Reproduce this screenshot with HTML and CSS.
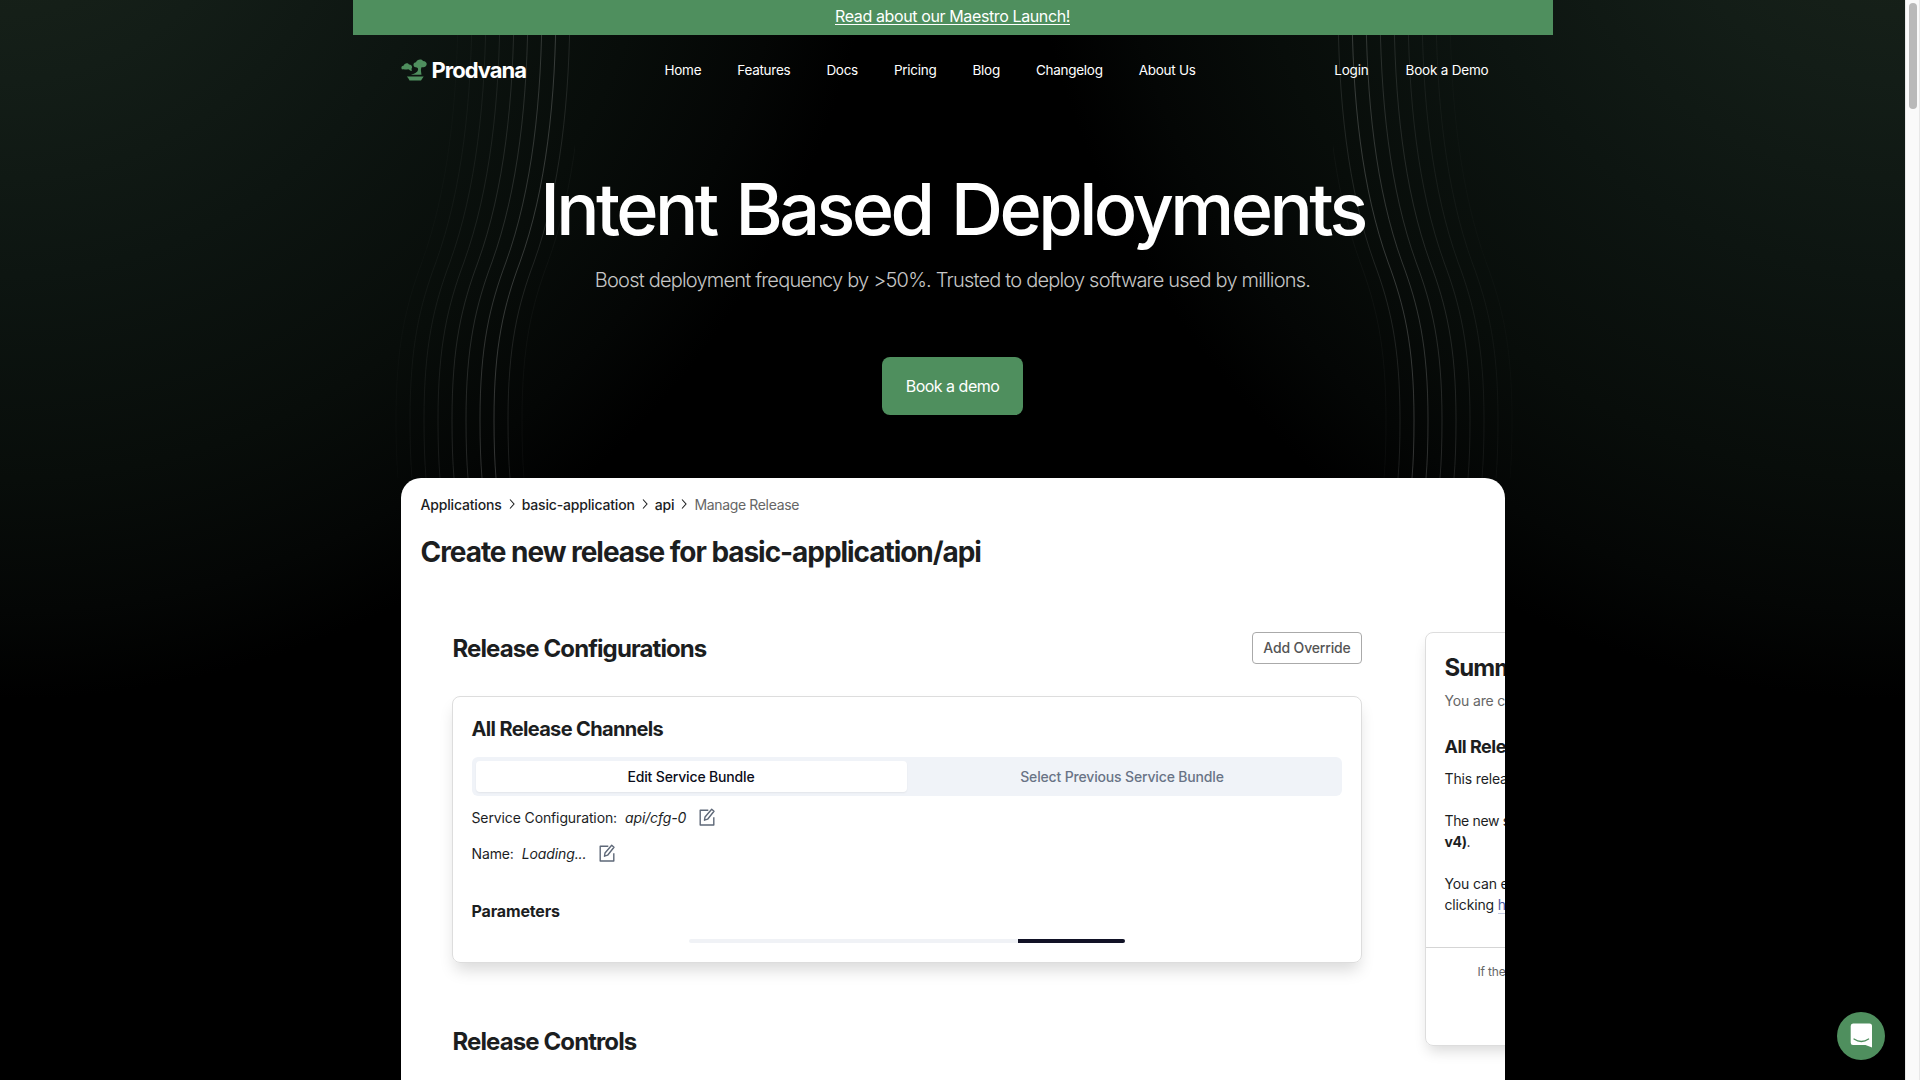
FILE: index.html
```html
<!DOCTYPE html>
<html lang="en">
<head>
<meta charset="utf-8">
<title>Prodvana</title>
<link rel="stylesheet" href="styles.css">
</head>
<body>
<svg class="sprites">
  <symbol id="chev" viewBox="0 0 8 12"><path d="M2 1.500 6 6 2 10.500" fill="none" stroke="currentColor" stroke-width="1.1"/></symbol>
  <symbol id="edit" viewBox="0 0 16 18"><path d="M9.300 2.200H1.200V17H14.800V9.200M5.500 12.200 6 9 12.700 1.300 15 3.300 8.600 11.200Z" fill="none" stroke="currentColor" stroke-width="1.400" stroke-linejoin="round"/></symbol>
</svg>
<div class="page">
  <div class="lines" aria-hidden="true">
    <svg class="curves" viewBox="0 0 180 478"><g id="strands-left" fill="none" stroke="#fff"></g></svg>
    <svg class="curves flip" viewBox="0 0 180 478"><g id="strands-right" fill="none" stroke="#fff"></g></svg>
  </div>
  <div class="container">
    <div class="banner"><a>Read about our Maestro Launch!</a></div>
    <header class="header">
      <div class="logo">
        <svg width="27" height="22" viewBox="0 0 27 22" fill="#4f8f5e"><path d="M1 10.500C-.5 8.500 1 6.500 2.500 6.800C3.300 4 7 3.500 8 5.600C10.500 5.500 12 8 10.500 9.800L10.800 12C9 12 8.500 10.500 7 10.300C5 11 3 9.800 1 10.500ZM13.500 8C11.500 6 12.700 3.200 15 3.200C16 .2 20.500 -.5 22 2C25.500 2 27 5.500 24.500 7.500C23 8.800 21.800 8 20.500 8.200C19.500 10.500 20 12 20.500 15.800H10C13 14.600 16.500 13.500 17 11C17.300 9.500 16.500 8.500 15.800 8.500ZM5.800 17.500H22.700L21.500 19.300L20 21.500H8.500L7.300 19.300Z"/></svg>
        <span>Prodvana</span>
      </div>
      <nav class="nav"><a>Home</a><a>Features</a><a>Docs</a><a>Pricing</a><a>Blog</a><a>Changelog</a><a>About Us</a></nav>
      <div class="account"><a>Login</a><a>Book a Demo</a></div>
    </header>
    <section class="hero">
      <h1>Intent Based Deployments</h1>
      <p>Boost deployment frequency by &gt;50%. Trusted to deploy software used by millions.</p>
      <a class="cta">Book a demo</a>
    </section>
    <main class="app">
      <div class="crumbs"><b>Applications</b><svg><use href="#chev"/></svg><b>basic-application</b><svg><use href="#chev"/></svg><b>api</b><svg><use href="#chev"/></svg><span>Manage Release</span></div>
      <h2>Create new release for basic-application/api</h2>
      <div class="columns">
        <div class="main-col">
          <div class="section-head"><h3>Release Configurations</h3><button class="override">Add Override</button></div>
          <div class="panel">
            <h4>All Release Channels</h4>
            <div class="tabs"><div class="tab on">Edit Service Bundle</div><div class="tab">Select Previous Service Bundle</div></div>
            <div class="field">Service Configuration: <i>api/cfg-0</i><svg><use href="#edit"/></svg></div>
            <div class="field">Name: <i>Loading...</i><svg><use href="#edit"/></svg></div>
            <h5>Parameters</h5>
            <div class="progress"><span></span></div>
          </div>
          <h3 class="controls">Release Controls</h3>
        </div>
        <aside class="summary">
          <h3>Summary</h3>
          <p class="muted">You are creating</p>
          <h4>All Release</h4>
          <p>This release</p>
          <p class="gap tight">The new service<br><b>v4)</b>.</p>
          <p class="gap">You can edit<br>clicking <a>here</a></p>
          <div class="foot">If the</div>
        </aside>
      </div>
    </main>
  </div>
</div>
<div class="scrollbar"><div class="thumb"></div></div>
<div class="chat"><svg width="24" height="26" viewBox="0 0 24 26"><path d="M3 .5H19.500Q22 .5 22 3V24.500L15.500 22H3Q.7 22 .7 19.500V3Q.7 .5 3 .5Z" fill="#fff"/><path d="M4 16Q11.300 21 18.600 16" fill="none" stroke="#4f8f5e" stroke-width="1.300" stroke-linecap="round"/></svg></div>
<script src="lines.js"></script>
</body>
</html>
```
FILE: lines.js
```
// Each strand is the same curve, shifted 14px to the right of the previous one.
var opacities = [0.02, 0.04, 0.06, 0.08, 0.11, 0.13, 0.17, 0.19, 0.1, 0.03];
["strands-left", "strands-right"].forEach(function (id) {
  var group = document.getElementById(id);
  opacities.forEach(function (o, i) {
    var path = document.createElementNS("http://www.w3.org/2000/svg", "path");
    path.setAttribute("d", "M62 0C62 100 52 190 26 262C10 305 0 345 0 420Q0 455 2 478");
    path.setAttribute("transform", "translate(" + (1 + i * 14) + " 0)");
    path.setAttribute("stroke-opacity", o);
    group.appendChild(path);
  });
});
```
FILE: styles.css
```css
* { box-sizing: border-box; margin: 0; padding: 0; }
body { height: 1080px; overflow: hidden; background: #000; display: flex; font-family: Inter, sans-serif; }
a { color: inherit; white-space: nowrap; }
.sprites { display: none; }
.page {
  position: relative; width: 1905px; height: 1080px; overflow: hidden; color: #fff;
  background:
    radial-gradient(circle 885px at 0 -185px, #172119 15%, #131d17 30%, #0d1511 52%, #080d0a 75%, #040605 90%, transparent) 0 0 / 952px 100% no-repeat,
    radial-gradient(circle 885px at 953px -185px, #172119 15%, #131d17 30%, #0d1511 52%, #080d0a 75%, #040605 90%, transparent) 952px 0 / 953px 100% no-repeat,
    #000;
}
.lines { position: absolute; top: 0; left: 394.5px; height: 478px; width: 1118px; display: flex; justify-content: space-between; }
.curves { width: 180px; height: 478px; }
.flip { transform: scaleX(-1); }
.container { position: relative; width: 1200px; margin: 0 auto; }
.banner { height: 35px; background: #4f8f5e; display: flex; justify-content: center; font-size: 16px; line-height: 33px; text-decoration: underline; text-underline-offset: 2px; letter-spacing: -.38px; }
.header { height: 71px; padding: 0 64px 2px 48px; display: grid; grid-template-columns: 264px 1fr auto; align-items: center; font-size: 13.500px; letter-spacing: -.27px; }
.logo { display: flex; align-items: center; gap: 4px; font-size: 22px; font-weight: 700; letter-spacing: -1px; }
.nav, .account { display: flex; gap: 36px; }
.account { gap: 37px; letter-spacing: -.2px; }
.hero { height: 372px; display: flex; flex-direction: column; align-items: center; padding-top: 58px; }
.hero h1 { font-size: 72px; line-height: 90px; font-weight: 460; letter-spacing: -3.550px; word-spacing: 4px; white-space: nowrap; }
.hero p { margin-top: 11px; font-size: 20px; line-height: 30px; font-weight: 300; letter-spacing: -.8px; color: #c6c6c6; white-space: nowrap; }
.cta { margin-top: 62px; width: 141px; height: 58px; border-radius: 8px; background: #4f8f5e; font-size: 16px; line-height: 58px; text-align: center; letter-spacing: -.5px; }
.app { width: 1104px; height: 620px; margin: 0 auto; padding: 17px 0 0 20px; background: #fff; color: #1c1e1f; border-radius: 20px 20px 0 0; overflow: hidden; }
.crumbs { display: flex; align-items: center; height: 18px; font-size: 14px; letter-spacing: -.17px; white-space: nowrap; color: #1c1e1f; }
.crumbs b { font-weight: 500; }
.crumbs span { color: #666; letter-spacing: -.34px; }
.crumbs svg { width: 8px; height: 12px; margin: 0 6px; }
.app h2 { margin-top: 19px; font-size: 28px; line-height: 40px; font-weight: 700; letter-spacing: -1.050px; white-space: nowrap; }
.columns { display: flex; gap: 63px; margin: 60px 0 0 31px; }
.main-col { width: 910px; flex: none; }
.section-head { display: flex; justify-content: space-between; height: 32px; align-items: center; }
.app h3 { padding-left: 1px; font-size: 24px; line-height: 32px; font-weight: 700; letter-spacing: -.9px; }
.section-head h3 { padding-top: 2px; }
.override { width: 110px; height: 32px; padding: 0 0 1px 1px; border: 1px solid #aaa; border-radius: 4px; background: #fff; color: #555; font: 500 14px Inter, sans-serif; letter-spacing: -.15px; }
.panel { margin-top: 32px; height: 267px; border: 1px solid #ddd; border-radius: 8px; padding: 19px; box-shadow: 0 10px 16px -3px rgba(0,0,0,.15); }
.app h4 { font-size: 20px; line-height: 26px; font-weight: 700; letter-spacing: -.65px; white-space: nowrap; }
.tabs { display: flex; height: 39px; margin-top: 15px; padding: 4px; background: #f0f3f8; border-radius: 6px; }
.tab { flex: 1; line-height: 31px; font-size: 14px; font-weight: 500; letter-spacing: -.16px; text-align: center; border-radius: 4px; color: #697386; }
.tab.on { background: #fff; color: #0b0d1a; box-shadow: 0 1px 2px rgba(0,0,0,.06); }
.field { display: flex; align-items: center; height: 36px; margin-top: 3px; font-size: 14px; letter-spacing: -.12px; white-space: nowrap; }
.field + .field { margin-top: 0; }
.field i { margin-left: 8px; }
.field svg { width: 16px; height: 18px; margin-left: 13px; color: #5e6878; }
.app h5 { margin-top: 28px; font-size: 16px; line-height: 24px; font-weight: 700; letter-spacing: -.15px; }
.progress { width: 436px; height: 4px; margin: 16px auto 0; border-radius: 2px; background: #f0f2f6; overflow: hidden; }
.progress span { display: block; width: 107px; height: 4px; margin-left: auto; background: #111226; }
.controls { margin-top: 63px; }
.summary { flex: none; width: 360px; height: 414px; border: 1px solid #ddd; border-radius: 8px; padding: 19px; box-shadow: 0 8px 14px -3px rgba(0,0,0,.15); font-size: 14px; line-height: 21px; letter-spacing: -.15px; }
.summary h3 { padding: 0; }
.summary .muted { color: #666; margin-top: 6px; }
.summary h4 { font-size: 18px; margin-top: 23px; letter-spacing: -.5px; }
.summary h4 + p { margin-top: 8px; }
.summary .gap { margin-top: 21px; }
.summary .tight { letter-spacing: -.35px; }
.summary a { color: #4b5aa5; border-bottom: 1px solid #c5cae2; }
.foot { margin: 32px -19px 0; padding: 13px 52px; border-top: 1px solid #d5d5d5; font-size: 12px; color: #666; }
.scrollbar { width: 15px; height: 1080px; background: #fafafa; border: solid #e8e8e8; border-width: 0 1px; padding: 3px 2px 3px 3px; }
.thumb { width: 8px; height: 106px; border-radius: 4px; background: #b9b9b9; }
.chat { position: fixed; left: 1837px; top: 1012px; width: 48px; height: 48px; padding-left: 1px; border-radius: 50%; background: #4f8f5e; display: flex; align-items: center; justify-content: center; }
```
